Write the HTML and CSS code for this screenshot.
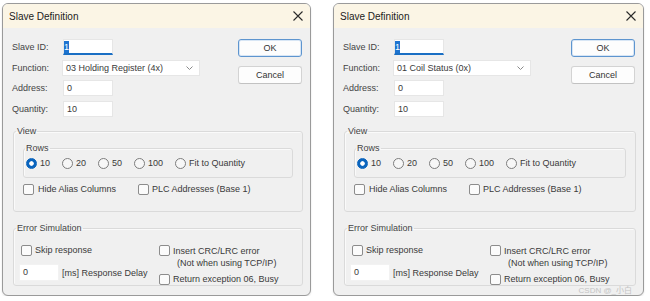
FILE: index.html
```html
<!DOCTYPE html>
<html lang="en">
<head>
  <meta charset="UTF-8" />
  <title>Slave Definition</title>
  <link rel="stylesheet" href="styles.css">
</head>
<body>

<div class="desk">

  <div class="dialog">
    <div class="titlebar">
      <span class="title">Slave Definition</span>
      <svg class="close" viewBox="0 0 10 10"><path d="M0.5 0.5 L9.5 9.5 M9.5 0.5 L0.5 9.5" stroke="#2a2a2a" stroke-width="1.1" fill="none"/></svg>
    </div>
    <div class="body">
      <div class="top">
        <div class="form">
          <span class="lbl">Slave ID:</span><span class="field focus"><span class="sel">1</span></span>
          <span class="lbl">Function:</span><span class="combo">03 Holding Register (4x)<svg class="chev" viewBox="0 0 7 4"><path d="M0.5 0.5 L3.5 3.5 L6.5 0.5" stroke="#8a8a8a" fill="none"/></svg></span>
          <span class="lbl">Address:</span><span class="field">0</span>
          <span class="lbl">Quantity:</span><span class="field">10</span>
        </div>
        <div class="buttons">
          <button class="btn default">OK</button>
          <button class="btn">Cancel</button>
        </div>
      </div>

      <fieldset class="group view">
        <legend>View</legend>
        <fieldset class="group rows">
          <legend>Rows</legend>
          <div class="radios">
            <label class="opt"><span class="radio on"></span>10</label>
            <label class="opt"><span class="radio"></span>20</label>
            <label class="opt"><span class="radio"></span>50</label>
            <label class="opt"><span class="radio"></span>100</label>
            <label class="opt"><span class="radio"></span>Fit to Quantity</label>
          </div>
        </fieldset>
        <div class="checks">
          <label class="opt alias"><span class="check"></span>Hide Alias Columns</label>
          <label class="opt"><span class="check"></span>PLC Addresses (Base 1)</label>
        </div>
      </fieldset>

      <fieldset class="group error">
        <legend>Error Simulation</legend>
        <div class="errgrid">
          <div class="col">
            <label class="opt"><span class="check"></span>Skip response</label>
            <div class="delay"><span class="field num">0</span>[ms] Response Delay</div>
          </div>
          <div class="col">
            <label class="opt multi"><span class="check"></span><span>Insert CRC/LRC error<span class="indent">(Not when using TCP/IP)</span></span></label>
            <label class="opt busy"><span class="check"></span>Return exception 06, Busy</label>
          </div>
        </div>
      </fieldset>
    </div>
  </div>

  <div class="dialog wide">
    <div class="titlebar">
      <span class="title">Slave Definition</span>
      <svg class="close" viewBox="0 0 10 10"><path d="M0.5 0.5 L9.5 9.5 M9.5 0.5 L0.5 9.5" stroke="#2a2a2a" stroke-width="1.1" fill="none"/></svg>
    </div>
    <div class="body">
      <div class="top">
        <div class="form">
          <span class="lbl">Slave ID:</span><span class="field focus"><span class="sel">1</span></span>
          <span class="lbl">Function:</span><span class="combo">01 Coil Status (0x)<svg class="chev" viewBox="0 0 7 4"><path d="M0.5 0.5 L3.5 3.5 L6.5 0.5" stroke="#8a8a8a" fill="none"/></svg></span>
          <span class="lbl">Address:</span><span class="field">0</span>
          <span class="lbl">Quantity:</span><span class="field">10</span>
        </div>
        <div class="buttons">
          <button class="btn default">OK</button>
          <button class="btn">Cancel</button>
        </div>
      </div>

      <fieldset class="group view">
        <legend>View</legend>
        <fieldset class="group rows">
          <legend>Rows</legend>
          <div class="radios">
            <label class="opt"><span class="radio on"></span>10</label>
            <label class="opt"><span class="radio"></span>20</label>
            <label class="opt"><span class="radio"></span>50</label>
            <label class="opt"><span class="radio"></span>100</label>
            <label class="opt"><span class="radio"></span>Fit to Quantity</label>
          </div>
        </fieldset>
        <div class="checks">
          <label class="opt alias"><span class="check"></span>Hide Alias Columns</label>
          <label class="opt"><span class="check"></span>PLC Addresses (Base 1)</label>
        </div>
      </fieldset>

      <fieldset class="group error">
        <legend>Error Simulation</legend>
        <div class="errgrid">
          <div class="col">
            <label class="opt"><span class="check"></span>Skip response</label>
            <div class="delay"><span class="field num">0</span>[ms] Response Delay</div>
          </div>
          <div class="col">
            <label class="opt multi"><span class="check"></span><span>Insert CRC/LRC error<span class="indent">(Not when using TCP/IP)</span></span></label>
            <label class="opt busy"><span class="check"></span>Return exception 06, Busy</label>
          </div>
        </div>
      </fieldset>
    </div>
    <span class="mark">CSDN @_小白</span>
  </div>

</div>

</body>
</html>
```

FILE: styles.css
```css
body {
  margin: 0;
  background: #fff;
  font-family: 'Liberation Sans', Arial, sans-serif;
  font-size: 9px;
  color: #3a3a3a;
}

.desk {
  display: flex;
  gap: 22px;
  padding: 3px 0 0 2px;
}

.dialog {
  position: relative;
  width: 309px;
  height: 293px;
  box-sizing: border-box;
  border: 1px solid #9a9a9a;
  border-radius: 6px;
  background: #f0f0f0;
  overflow: hidden;
  display: flex;
  flex-direction: column;
  box-shadow: 0 1px 2px rgba(0, 0, 0, 0.12);
}

.dialog.wide {
  width: 311px;
}

.titlebar {
  flex: none;
  height: 24px;
  display: flex;
  align-items: center;
  justify-content: space-between;
  padding: 0 7px 0 6px;
  background: #fbf5e5;
}

.title {
  font-size: 10px;
  color: #1b1b1b;
}

.close {
  width: 10px;
  height: 10px;
}

.body {
  flex: 1;
  padding: 11px 7px 0 9px;
}

/* top part: fields + buttons */
.top {
  display: flex;
  align-items: flex-start;
}

.form {
  display: grid;
  grid-template-columns: 51px auto;
  grid-auto-rows: 16px;
  row-gap: 4.7px;
  align-items: center;
}

.lbl {
  color: #444;
}

.field {
  display: block;
  width: 50px;
  height: 16px;
  box-sizing: border-box;
  background: #fff;
  border: 1px solid #e6e6e6;
  padding: 1px 0 0 3px;
  line-height: 12px;
  color: #3a3a3a;
}

.field.focus {
  border-bottom: 2px solid #1a6fc4;
  padding: 1px 0 0 0;
}

.sel {
  display: inline-block;
  width: 5px;
  height: 12px;
  background: #1e74d0;
  color: #fff;
  text-align: center;
}

.combo {
  display: flex;
  align-items: center;
  justify-content: space-between;
  width: 138px;
  height: 16px;
  margin-left: -1px;
  box-sizing: border-box;
  background: #fff;
  border: 1px solid #e6e6e6;
  padding: 0 6px 0 3px;
  color: #3a3a3a;
}

.chev {
  width: 7px;
  height: 4px;
}

.buttons {
  margin-left: auto;
  margin-right: 1px;
  display: flex;
  flex-direction: column;
  gap: 9px;
}

.btn {
  width: 64px;
  height: 18px;
  padding: 0;
  font: inherit;
  color: #333;
  background: #fdfdfd;
  border: 1px solid #d3d3d3;
  border-bottom-color: #c2c2c2;
  border-radius: 3px;
}

.btn.default {
  border: 1px solid #5e95cf;
  box-shadow: inset 0 0 0 1px #d8e6f5;
}

/* group boxes */
.group {
  margin: 0;
  border: 1px solid #dadada;
  border-radius: 3px;
  box-shadow: inset 1px 1px 0 #fafafa;
  min-inline-size: 0;
}

.group legend {
  padding: 0 1px;
  line-height: 11px;
  color: #444;
}

.view {
  margin: 8.5px 0 0 1px;
  padding: 6px 9px 16px 9px;
}

.view > legend {
  margin-left: -7px;
}

.rows {
  padding: 4px 2px 8.5px 2px;
}

.rows > legend {
  margin-left: -1px;
}

.error {
  margin: 11px 0 0 1px;
  padding: 11px 7px 0 7px;
}

.error > legend {
  margin-left: -5px;
}

/* options */
.opt {
  display: flex;
  align-items: center;
  gap: 3px;
  line-height: 11px;
  white-space: nowrap;
}

.radio,
.check {
  flex: none;
  width: 11px;
  height: 11px;
  box-sizing: border-box;
  border: 1px solid #7d7d7d;
  background: #f7f7f7;
}

.radio {
  border-radius: 50%;
}

.radio.on {
  border-color: #0a64bd;
  background: radial-gradient(circle, #fff 0 1.9px, #0a64bd 2.6px);
}

.check {
  border-radius: 2px;
  border-color: #8c8c8c;
  background: #fbfbfb;
}

.radios {
  display: flex;
  gap: 12px;
}

.checks {
  display: flex;
  margin-top: 5.5px;
}

.checks .alias {
  width: 115px;
  gap: 4px;
}

.errgrid {
  display: grid;
  grid-template-columns: 138px auto;
}

.col {
  display: flex;
  flex-direction: column;
}

.delay {
  display: flex;
  align-items: center;
  gap: 3px;
  margin: 8.5px 0 0 -2px;
}

.field.num {
  width: 40px;
  height: 17px;
  border-color: #f2f2f2;
}

.opt.multi {
  align-items: flex-start;
  line-height: 12px;
}

.opt.multi .check {
  margin-top: 0.5px;
}

.indent {
  display: block;
  padding-left: 4px;
}

.opt.busy {
  margin-top: 5.5px;
}

.mark {
  position: absolute;
  right: 11px;
  bottom: 0;
  font-family: 'Liberation Sans', 'Noto Sans CJK SC', sans-serif;
  font-size: 8px;
  line-height: 9px;
  color: #c4c4c4;
}
```
